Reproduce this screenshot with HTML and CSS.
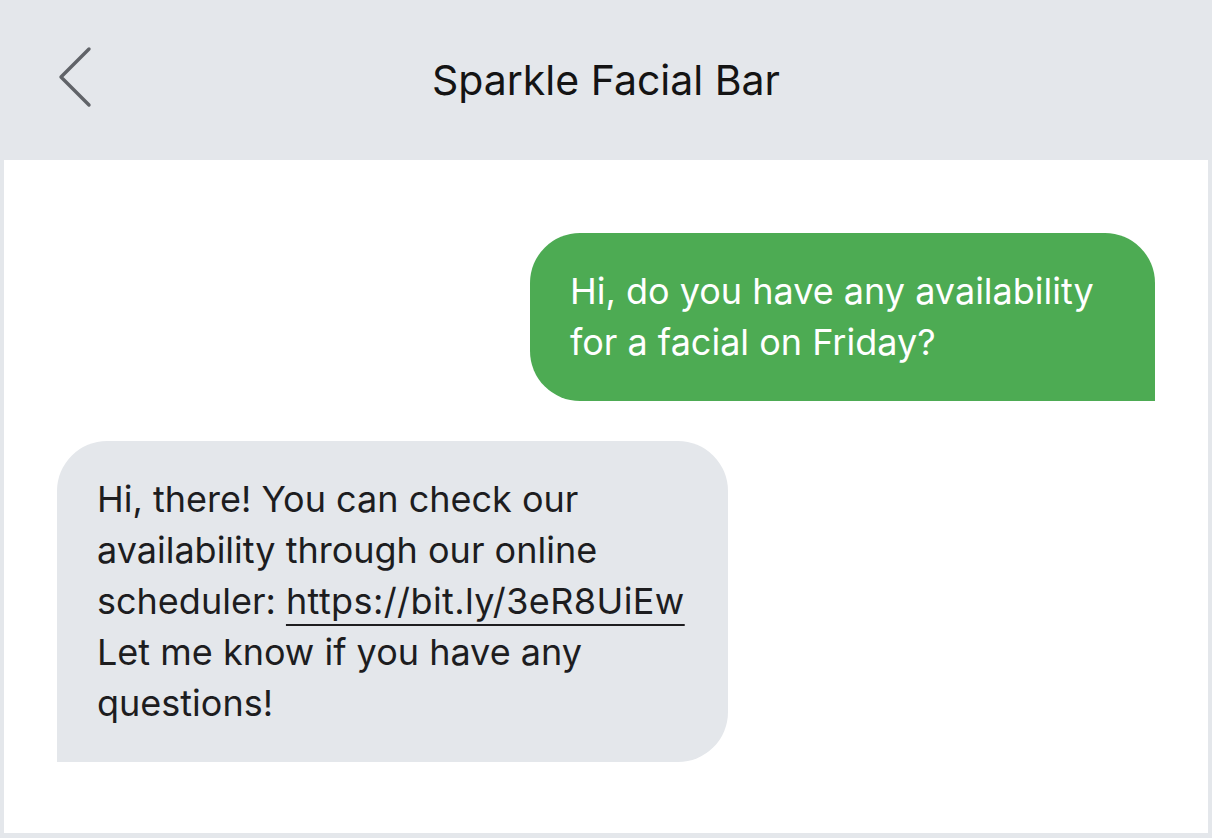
FILE: index.html
```html
<!DOCTYPE html>
<html lang="en">
<head>
<meta charset="utf-8">
<title>Sparkle Facial Bar</title>
<link rel="stylesheet" href="styles.css">
</head>
<body>
<div class="app">
  <header class="topbar">
    <button class="back" aria-label="Back">
      <svg width="40" height="64" viewBox="0 0 40 64" aria-hidden="true">
        <path d="M32 3 L4 31 L32 59" fill="none" stroke="#606368" stroke-width="3.4" stroke-linecap="round" stroke-linejoin="round"/>
      </svg>
    </button>
    <h1 class="title">Sparkle Facial Bar</h1>
    <span class="spacer"></span>
  </header>
  <main class="thread">
    <div class="msg msg-out">Hi, do you have any availability<br>for a facial on Friday?</div>
    <div class="msg msg-in">Hi, there! You can check our<br>availability through our online<br>scheduler: <a class="link" href="#">https://bit.ly/3eR8UiEw</a><br>Let me know if you have any<br>questions!</div>
  </main>
</div>
</body>
</html>
```

FILE: styles.css
```css
* { box-sizing: border-box; }

html, body {
  margin: 0;
  padding: 0;
}

body {
  background: #e4e7eb;
  font-family: Inter, Roboto, "Liberation Sans", Arial, sans-serif;
  color: #1d1d1f;
}

.app {
  width: 1212px;
  height: 838px;
  display: flex;
  flex-direction: column;
  padding: 0 4px 5px 4px;
}

.topbar {
  height: 160px;
  flex: 0 0 160px;
  display: grid;
  grid-template-columns: 120px 1fr 120px;
  align-items: center;
  margin: 0 -4px;
}

.back {
  background: none;
  border: 0;
  padding: 0;
  margin: 0 0 4px 57px;
  width: 40px;
  height: 64px;
  display: flex;
  align-items: center;
  cursor: pointer;
}

.title {
  margin: 0;
  text-align: center;
  font-size: 41px;
  font-weight: 400;
  color: #141414;
}

.thread {
  flex: 1;
  background: #ffffff;
  display: flex;
  flex-direction: column;
  padding: 73px 53px 0 53px;
  gap: 40px;
}

.msg {
  font-size: 36px;
  line-height: 51px;
  padding: 33px 40px 33px 40px;
  white-space: nowrap;
}

.msg-out {
  align-self: flex-end;
  width: 625px;
  background: #4dab53;
  color: #ffffff;
  border-radius: 50px 50px 0 50px;
}

.msg-in {
  align-self: flex-start;
  width: 671px;
  background: #e4e7eb;
  color: #1d1d1f;
  border-radius: 50px 50px 50px 0;
}

.link {
  color: inherit;
  text-decoration: underline;
  text-decoration-thickness: 2px;
  text-underline-offset: 10px;
  letter-spacing: 0.4px;
}
```
